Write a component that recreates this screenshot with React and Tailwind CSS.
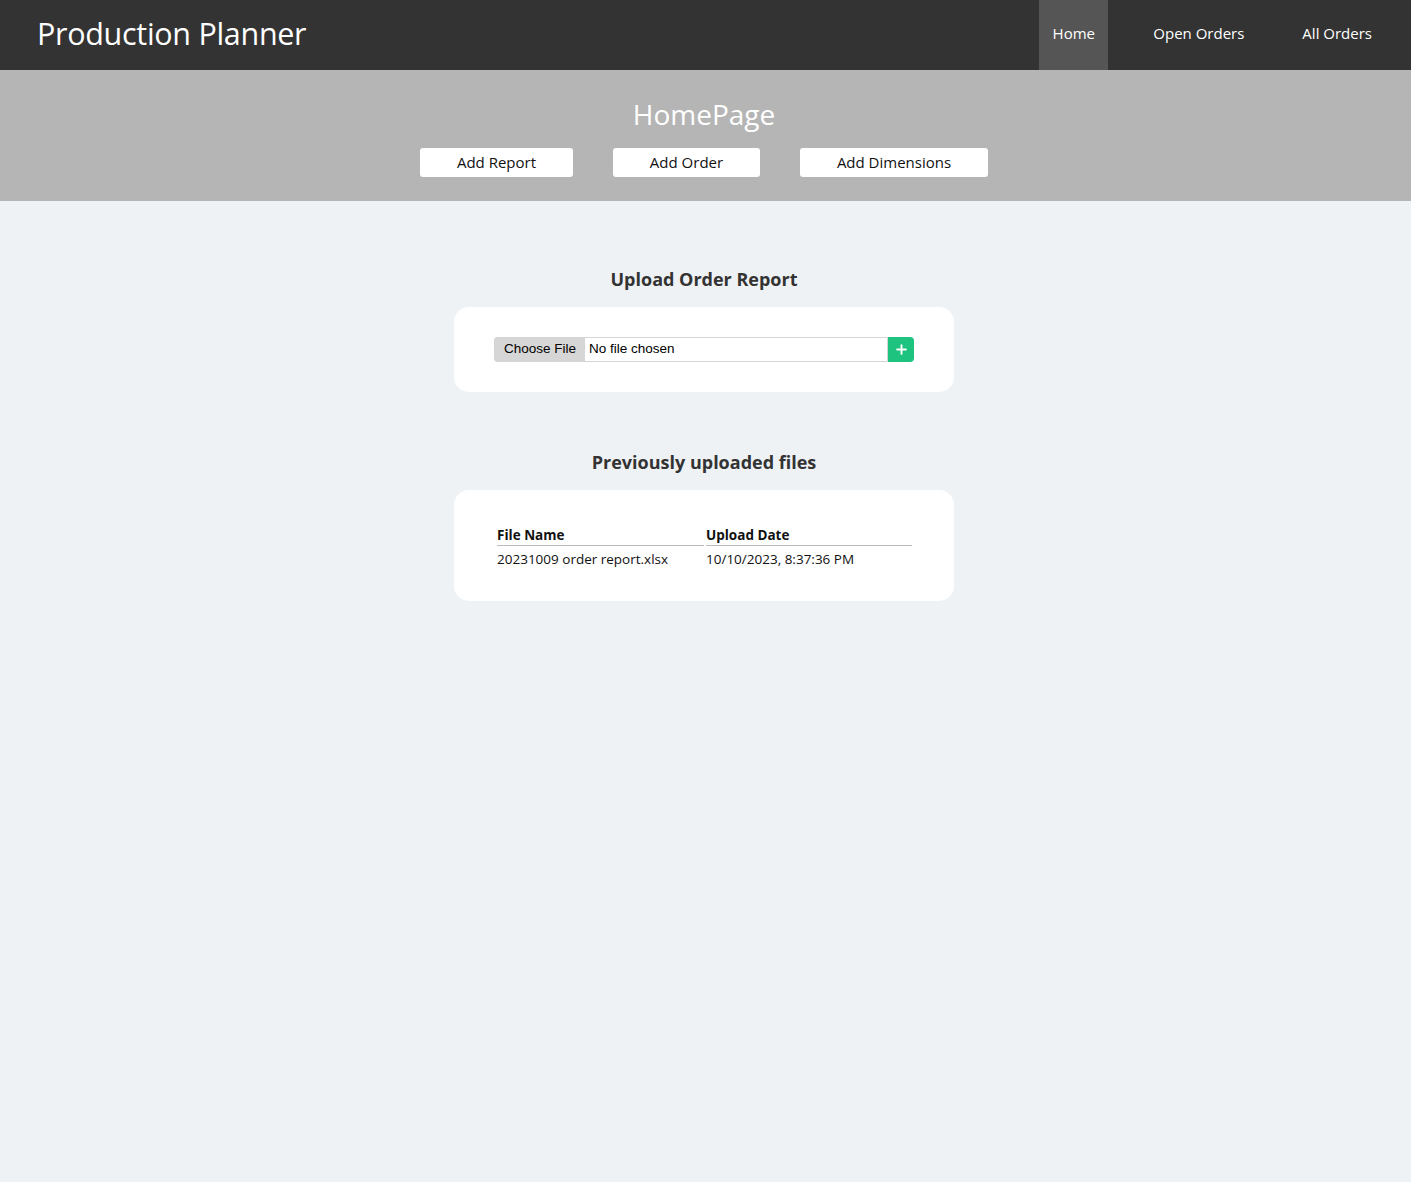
import { Plus } from "lucide-react";

const font = { fontFamily: '"Open Sans", "Noto Sans", sans-serif' };

function NavBar() {
  return (
    <div className="h-[70px] bg-[#333333] flex items-center justify-between">
      <div className="pl-[37px] pb-[2px] text-white text-[30.5px] tracking-[-0.3px]">Production Planner</div>
      <div className="flex h-full text-white text-[15px]">
        <a className="h-[70px] w-[69px] bg-[#555555] flex items-center justify-center pb-[4px]">Home</a>
        <a className="h-[70px] px-[45px] flex items-center pb-[4px]">Open Orders</a>
        <a className="h-[70px] pl-[13px] pr-[39px] flex items-center pb-[4px]">All Orders</a>
      </div>
    </div>
  );
}

function SubHeader() {
  return (
    <div className="h-[131px] bg-[#b5b5b5] flex flex-col items-center pt-[24px] pr-[3px]">
      <h1 className="text-white text-[28px] leading-[40px]">HomePage</h1>
      <div className="flex gap-[40px] mt-[14px]">
        <button className="w-[153px] h-[29px] bg-white rounded-[3px] text-[15px] text-[#111]">Add Report</button>
        <button className="w-[147px] h-[29px] bg-white rounded-[3px] text-[15px] text-[#111]">Add Order</button>
        <button className="w-[188px] h-[29px] bg-white rounded-[3px] text-[15px] text-[#111]">Add Dimensions</button>
      </div>
    </div>
  );
}

function UploadCard() {
  return (
    <div className="w-[500px] h-[85px] bg-white rounded-[15px] flex items-center justify-center">
      <div className="flex w-[420px] h-[25px]">
        <div
          className="flex flex-1 items-center border border-[#d4d4d4] rounded-l-[3px] text-[13.5px] text-black"
          style={{ fontFamily: '"Liberation Sans", Arial, sans-serif' }}
        >
          <span className="h-full flex items-center bg-[#d6d6d6] px-[9px] font-medium">Choose File</span>
          <span className="pl-[4px]">No file chosen</span>
        </div>
        <button className="w-[26px] h-full bg-[#1dc37e] rounded-r-[4px] flex items-center justify-center text-white">
          <Plus size={15} strokeWidth={3} />
        </button>
      </div>
    </div>
  );
}

function FilesCard() {
  return (
    <div className="w-[500px] h-[111px] bg-white rounded-[15px] pt-[34px] px-[41px]">
      <table className="w-[419px] border-separate border-spacing-[2px] text-[13.5px] text-[#111]">
        <thead>
          <tr>
            <th className="text-left font-bold border-b border-[#bbbbbb] pb-0 leading-[19px] w-[207px]">File Name</th>
            <th className="text-left font-bold border-b border-[#bbbbbb] pb-0 leading-[19px]">Upload Date</th>
          </tr>
        </thead>
        <tbody>
          <tr>
            <td className="leading-[22px]">20231009 order report.xlsx</td>
            <td className="leading-[22px]">10/10/2023, 8:37:36 PM</td>
          </tr>
        </tbody>
      </table>
    </div>
  );
}

export default function App() {
  return (
    <div className="min-h-[1182px] bg-[#eff2f5]" style={font}>
      <NavBar />
      <SubHeader />
      <div className="flex flex-col items-center pr-[3px]">
        <h2 className="mt-[65px] text-[18px] font-bold text-[#333] leading-[26px]">Upload Order Report</h2>
        <div className="mt-[15px]">
          <UploadCard />
        </div>
        <h2 className="mt-[57px] text-[18px] font-bold text-[#333] leading-[26px]">Previously uploaded files</h2>
        <div className="mt-[15px]">
          <FilesCard />
        </div>
      </div>
    </div>
  );
}
